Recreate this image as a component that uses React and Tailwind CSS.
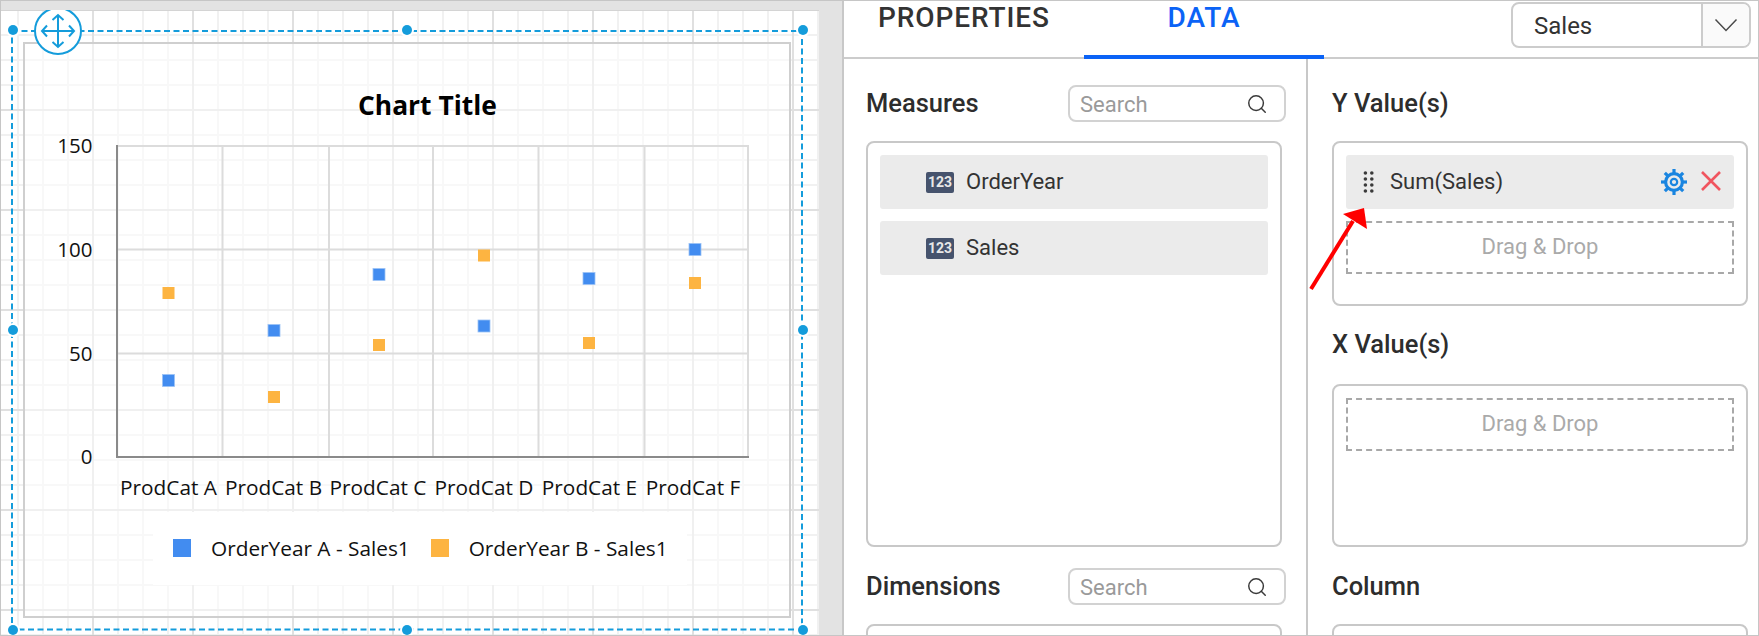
import React from "react";
import { Search } from "lucide-react";

const BLUE = "#428cf0";
const ORANGE = "#fdb441";
const SEL = "#149cdb";

const cats = [
  ["ProdCat A", 168.5],
  ["ProdCat B", 273.5],
  ["ProdCat C", 378],
  ["ProdCat D", 484],
  ["ProdCat E", 589.5],
  ["ProdCat F", 693],
];
const blues = [[168.5, 380.5], [274, 330.5], [379, 274.5], [484, 326], [589, 278.5], [695, 249.5]];
const oranges = [[168.5, 293], [274, 397], [379, 345], [484, 255.5], [589, 343], [695, 283]];

function Plot() {
  const vx = [222.5, 329, 433, 538.5, 644.5, 748];
  const hy = [146, 249.5, 353.5];
  const ylabels = [["150", 153], ["100", 256.5], ["50", 361], ["0", 464]];
  return (
    <svg width="764" height="382" viewBox="25 130 764 382" className="block">
      {vx.map((x) => (
        <line key={x} x1={x} x2={x} y1="145" y2="457" stroke="#dcdcdc" strokeWidth="2" />
      ))}
      {hy.map((y) => (
        <line key={y} x1="117" x2="749" y1={y} y2={y} stroke="#dcdcdc" strokeWidth="2" />
      ))}
      <line x1="117" x2="117" y1="145" y2="458" stroke="#8a8a8a" strokeWidth="2" />
      <line x1="116" x2="749" y1="457" y2="457" stroke="#8a8a8a" strokeWidth="2" />
      {blues.map(([x, y]) => (
        <rect key={x} x={x - 6} y={y - 6} width="12" height="12" fill={BLUE} stroke="#9cc2f6" strokeWidth="0.8" />
      ))}
      {oranges.map(([x, y]) => (
        <rect key={x} x={x - 6} y={y - 6} width="12" height="12" fill={ORANGE} />
      ))}
      {ylabels.map(([t, y]) => (
        <text key={t} x="92.5" y={y} textAnchor="end" fill="#111" className="font-['Open_Sans',sans-serif] text-[20.5px]">
          {t}
        </text>
      ))}
      {cats.map(([t, x]) => (
        <text key={t} x={x} y="495" textAnchor="middle" fill="#111" className="font-['Open_Sans',sans-serif] text-[20.8px]">
          {t}
        </text>
      ))}
    </svg>
  );
}

function Legend({ color, children }) {
  return (
    <div className="flex items-center">
      <span className="h-[18px] w-[18px]" style={{ backgroundColor: color }} />
      <span className="ml-5 text-[20.8px] leading-none text-[#111]">{children}</span>
    </div>
  );
}

function SelectionOverlay() {
  const handles = [
    [13, 30], [407, 30], [803, 30],
    [13, 330], [803, 330],
    [13, 630], [407, 630], [803, 630],
  ];
  return (
    <svg className="absolute left-0 top-0 h-[626px] w-[818px]" viewBox="1 10 818 626">
      <rect x="12" y="31" width="790" height="598.5" fill="none" stroke={SEL} strokeWidth="2" strokeDasharray="6 3.5" />
      {handles.map(([x, y]) => (
        <g key={`${x}-${y}`}>
          <circle cx={x} cy={y} r="7" fill="#fff" />
          <circle cx={x} cy={y} r="5" fill={SEL} />
        </g>
      ))}
      <circle cx="58" cy="31" r="23" fill="#fff" stroke={SEL} strokeWidth="2" />
      <g fill="none" stroke={SEL} strokeWidth="2">
        <path d="M42 31H74M58 15V47" />
        <path d="M47 25.5L42 31L47 36.5M69 25.5L74 31L69 36.5M52.5 20L58 15L63.5 20M52.5 42L58 47L63.5 42" />
      </g>
    </svg>
  );
}

function Canvas() {
  return (
    <div className="relative h-full w-[818px] bg-white bg-[linear-gradient(to_right,#e0e0e0_2px,transparent_2px),linear-gradient(to_bottom,#e0e0e0_2px,transparent_2px),linear-gradient(to_right,#f1f1f1_2px,transparent_2px),linear-gradient(to_bottom,#f1f1f1_2px,transparent_2px)] bg-[size:100px_100px,100px_100px,25px_25px,25px_25px] bg-[position:91px_0,0_99px,16px_0,0_24px] shadow-[inset_0_1px_0_#d4d4d4]">
      <div className="absolute left-[22px] top-[32px] h-[576px] w-[768px] border-2 border-[#cfcfcf] bg-white/50 font-['Open_Sans',sans-serif]">
        <div className="h-[86px] pl-[333px] pt-[43px] text-[26.4px] font-bold leading-[36px] text-black">Chart Title</div>
        <Plot />
        <div className="ml-[128px] flex h-[73px] w-[534px] items-center gap-[21px] bg-white pl-[20px]">
          <Legend color={BLUE}>OrderYear A - Sales1</Legend>
          <Legend color={ORANGE}>OrderYear B - Sales1</Legend>
        </div>
      </div>
      <SelectionOverlay />
    </div>
  );
}

function SearchBox() {
  return (
    <div className="flex h-[37px] w-[218px] shrink-0 items-center justify-between rounded-[8px] border-2 border-[#d2d2d2] pl-[10px] pr-[16px] text-[22px] text-[#9a9a9a]">
      <span className="pt-[2px]">Search</span>
      <Search size={22} strokeWidth={1.6} color="#3a3a3a" />
    </div>
  );
}

function Badge() {
  return (
    <span className="flex h-[21px] w-[28px] items-center justify-center rounded-[2px] bg-[#46536d] text-[14px] font-bold leading-none text-[#e8e8e8]">
      123
    </span>
  );
}

function MeasureItem({ children }) {
  return (
    <div className="flex h-[54px] items-center rounded-[3px] bg-[#ebebeb] pl-[46px] text-[22px] text-[#333]">
      <Badge />
      <span className="ml-[12px] pb-[2px]">{children}</span>
    </div>
  );
}

function Title({ children }) {
  return <div className="h-[37px] text-[25.5px] font-medium leading-[36px] text-[#2d2d2d]">{children}</div>;
}

function DropZone() {
  return (
    <div className="flex h-[53px] items-center justify-center border-2 border-dashed border-[#a8a8a8] pb-[2px] text-[22px] text-[#aaaaaa]">
      Drag &amp; Drop
    </div>
  );
}

function Gear() {
  const teeth = [0, 45, 90, 135, 180, 225, 270, 315];
  return (
    <svg width="28" height="28" viewBox="0 0 28 28" fill="none" stroke="#1a85e0">
      <circle cx="14" cy="14" r="8.4" strokeWidth="3.2" />
      <circle cx="14" cy="14" r="3.2" strokeWidth="2.2" />
      {teeth.map((a) => (
        <line key={a} x1="14" y1="1" x2="14" y2="5" strokeWidth="3.2" transform={`rotate(${a} 14 14)`} />
      ))}
    </svg>
  );
}

function Dots() {
  const ys = [2, 8, 14, 20];
  return (
    <svg width="12" height="22" viewBox="0 0 12 22" fill="#3a3a3a">
      {ys.map((y) => (
        <g key={y}>
          <circle cx="2.4" cy={y} r="1.8" />
          <circle cx="8.8" cy={y} r="1.8" />
        </g>
      ))}
    </svg>
  );
}

export default function App() {
  return (
    <div className="relative flex h-[636px] w-[1759px] overflow-hidden border border-[#c6c6c6] bg-white font-['Roboto',sans-serif]">
      <div className="h-full w-[843px] shrink-0 border-r-2 border-[#c8c8c8] bg-[#e3e3e3] pt-[9px]">
        <Canvas />
      </div>

      <div className="flex h-full min-w-0 flex-1 flex-col">
        <div className="flex h-[58px] shrink-0 items-start border-b-2 border-[#cccccc]">
          <div className="w-[240px] text-center text-[28px] font-medium leading-[33px] tracking-[0.9px] text-[#333]">
            PROPERTIES
          </div>
          <div className="h-[58px] w-[240px] border-b-4 border-[#0b63f6] text-center text-[28px] font-medium leading-[33px] tracking-[0.9px] text-[#0b63f6]">
            DATA
          </div>
          <div className="ml-auto mr-[7px] mt-[1px] flex h-[46px] w-[240px] overflow-hidden rounded-[8px] border-2 border-[#cccccc]">
            <div className="flex flex-1 items-center pl-[21px] pt-[2px] text-[24px] text-[#333]">Sales</div>
            <div className="flex w-[48px] items-center justify-center border-l-2 border-[#cccccc] bg-[#fafafa]">
              <svg width="24" height="14" viewBox="0 0 24 14" fill="none" stroke="#4a4a4a" strokeWidth="1.5">
                <path d="M1.5 1.5L12 12.5L22.5 1.5" />
              </svg>
            </div>
          </div>
        </div>

        <div className="flex min-h-0 flex-1">
          <div className="w-[462px] shrink-0 pl-[22px] pt-[26px]">
            <div className="flex w-[420px] items-center justify-between">
              <Title>Measures</Title>
              <SearchBox />
            </div>
            <div className="mt-[19px] flex h-[406px] w-[416px] flex-col gap-[12px] rounded-[8px] border-2 border-[#c8c8c8] p-[12px]">
              <MeasureItem>OrderYear</MeasureItem>
              <MeasureItem>Sales</MeasureItem>
            </div>
            <div className="mt-[21px] flex w-[420px] items-center justify-between">
              <Title>Dimensions</Title>
              <SearchBox />
            </div>
            <div className="mt-[19px] h-[100px] w-[416px] rounded-[8px] border-2 border-[#c8c8c8]" />
          </div>

          <div className="flex-1 border-l-2 border-[#c8c8c8] pl-[24px] pt-[26px]">
            <Title>Y Value(s)</Title>
            <div className="mt-[19px] flex h-[165px] w-[416px] flex-col gap-[12px] rounded-[8px] border-2 border-[#c8c8c8] p-[12px]">
              <div className="flex h-[54px] shrink-0 items-center rounded-[3px] bg-[#ebebeb] pl-[17px] pr-[12px] text-[22px] text-[#333]">
                <Dots />
                <span className="ml-[15px] pb-[2px]">Sum(Sales)</span>
                <span className="ml-auto">
                  <Gear />
                </span>
                <svg className="ml-[12px] -translate-y-[1px]" width="22" height="22" viewBox="0 0 22 22" stroke="#f0555f" strokeWidth="2.6">
                  <path d="M2 2L20 20M20 2L2 20" />
                </svg>
              </div>
              <DropZone />
            </div>
            <div className="mt-[20px]">
              <Title>X Value(s)</Title>
            </div>
            <div className="mt-[21px] h-[163px] w-[416px] rounded-[8px] border-2 border-[#c8c8c8] p-[12px]">
              <DropZone />
            </div>
            <div className="mt-[21px]">
              <Title>Column</Title>
            </div>
            <div className="mt-[19px] h-[100px] w-[416px] rounded-[8px] border-2 border-[#c8c8c8]" />
          </div>
        </div>
      </div>

      <svg className="absolute left-[1300px] top-[200px] h-[100px] w-[80px]" viewBox="1301 201 80 100">
        <line x1="1311" y1="289" x2="1353" y2="221" stroke="#ff0000" strokeWidth="4" />
        <polygon points="1364,208 1343,214 1367,229" fill="#ff0000" />
      </svg>
    </div>
  );
}
